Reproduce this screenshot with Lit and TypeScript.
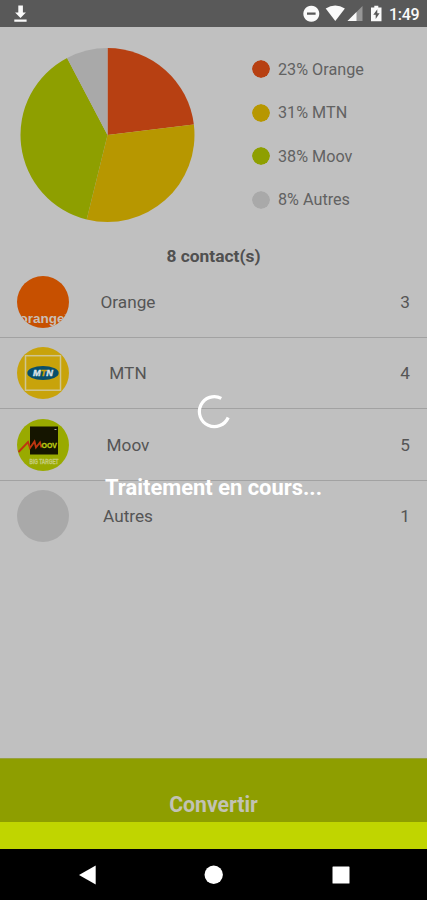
import { LitElement, html, svg, css } from "lit";
import { customElement } from "lit/decorators.js";

interface Slice {
  name: string;
  percent: number;
  count: number;
  color: string;
}

const SLICES: Slice[] = [
  { name: "Orange", percent: 23, count: 3, color: "#b74012" },
  { name: "MTN", percent: 31, count: 4, color: "#b79700" },
  { name: "Moov", percent: 38, count: 5, color: "#8e9f00" },
  { name: "Autres", percent: 8, count: 1, color: "#a9a9a9" },
];
const TOTAL = SLICES.reduce((sum, s) => sum + s.count, 0);

@customElement("status-bar")
class StatusBar extends LitElement {
  static styles = css`
    :host { display: block; height: 26.5px; background: #595959; }
    svg { display: block; }
    text { font: 500 16px Roboto, sans-serif; fill: #fafafa; }
  `;
  render() {
    return html`<svg width="427" height="27" viewBox="0 0 427 27" fill="#fafafa">
      <path d="M18.3 5.5h4.6v7h3L20.5 18l-5.400-5.500h3.200zM14.300 19.600h12.300v2.200H14.300z" />
      <path fill-rule="evenodd" d="M311.300 5.700a8 8 0 1 0 .01 0zM307 12.500h8.600v2.200H307z" />
      <path d="M325.700 8.600Q335.200 2.600 344.900 8.600L335.300 21z" />
      <path d="M362.500 6v15h-15z" opacity=".38" />
      <path d="M356.500 12v9h-9z" />
      <path fill-rule="evenodd" d="M374.300 5.800h4v1.700h3.200v13.700H371V7.500h3.300zM377.300 9.300l-4 5.500h2.400v4.200l3.900-5.800h-2.300z" />
      <text x="389" y="20" textLength="30.500">1:49</text>
    </svg>`;
  }
}

@customElement("share-pie")
class SharePie extends LitElement {
  static styles = css`
    :host { display: block; width: 175px; height: 175px; }
    svg { display: block; }
  `;
  render() {
    const cx = 87.5;
    const cy = 87;
    const r = 87;
    const point = (share: number) => {
      const a = share * Math.PI * 2;
      return `${cx + r * Math.sin(a)} ${cy - r * Math.cos(a)}`;
    };
    let from = 0;
    return html`<svg width="175" height="175">
      ${SLICES.map((s) => {
        const to = from + s.count / TOTAL;
        const d = `M${cx} ${cy}L${point(from)}A${r} ${r} 0 0 1 ${point(to)}Z`;
        from = to;
        return svg`<path d=${d} fill=${s.color} />`;
      })}
    </svg>`;
  }
}

@customElement("operator-logo")
class OperatorLogo extends LitElement {
  static properties = { name: { type: String } };
  declare name: string;
  static styles = css`
    :host { display: block; width: 52px; height: 52px; }
    svg { display: block; width: 52px; height: 52px; border-radius: 50%; }
    text { font-family: "Liberation Sans", sans-serif; font-weight: 700; }
    .brand { font-size: 13.500px; fill: #c9bfb6; }
    .mtn { font-size: 9px; font-style: italic; fill: #dbe3e6; stroke: #dbe3e6; stroke-width: .4px; }
    .gold { fill: #c9a20c; stroke: #c9a20c; }
    .moov { font-size: 7.500px; fill: #bdcb12; stroke: #bdcb12; stroke-width: .3px; }
    .mark { font-size: 3px; }
    .tag { font-size: 6.500px; fill: #c5cc78; stroke: #c5cc78; stroke-width: .3px; }
  `;
  private art() {
    switch (this.name) {
      case "Orange":
        return svg`<rect width="52" height="52" fill="#c75000" />
          <text class="brand" x="2.500" y="47">orange<tspan class="mark" dy="-7">™</tspan></text>`;
      case "MTN":
        return svg`<rect width="52" height="52" fill="#c8a30b" />
          <rect x="8.500" y="8.700" width="35" height="34.500" fill="none" stroke="#cfc591" stroke-width="1.500" />
          <ellipse cx="26" cy="26" rx="15.700" ry="7" fill="#094f6b" />
          <text class="mtn" x="16" y="29.200" textLength="20" lengthAdjust="spacingAndGlyphs">M<tspan class="gold">T</tspan>N</text>`;
      case "Moov":
        return svg`<rect width="52" height="52" fill="#99aa00" />
          <rect x="13" y="7.500" width="28" height="28" fill="#151500" />
          <path d="M1.500 33L11 23L13 29L17.500 22.500L19 28.500L23 23.500L24.500 28.500" fill="none" stroke="#be3510" stroke-width="1.900" />
          <text class="moov" x="24.500" y="28.500" textLength="15.500" lengthAdjust="spacingAndGlyphs">OOV</text>
          <rect x="37.500" y="10" width="2" height="1" fill="#aaa" />
          <text class="tag" x="12.500" y="45.200" textLength="29" lengthAdjust="spacingAndGlyphs">BIG TARGET</text>`;
      default:
        return svg`<rect width="52" height="52" fill="#a9a9a9" />`;
    }
  }
  render() {
    return html`<svg viewBox="0 0 52 52">${this.art()}</svg>`;
  }
}

@customElement("app-root")
class AppRoot extends LitElement {
  static styles = css`
    :host {
      display: flex; flex-direction: column; position: relative;
      width: 427px; height: 900px; overflow: hidden;
      background: #c0c0c0; color: #555; font-family: Roboto, sans-serif;
    }
    .summary { display: flex; padding: 21px 0 0 19.5px; height: 175px; }
    .legend { display: flex; flex-direction: column; margin-left: 57px; }
    .entry { display: flex; align-items: center; height: 43.5px; gap: 8.500px; font-size: 16.200px; color: #626262; }
    .dot { width: 18px; height: 18px; border-radius: 50%; }
    .total { margin: 23.500px 0 0; height: 20px; line-height: 20px; text-align: center; font-size: 17.400px; font-weight: 700; color: #505050; }
    .list { flex: 1; padding-top: .9px; }
    .row {
      display: grid; grid-template-columns: 52px 118px 1fr; align-items: center;
      height: 70.300px; padding: 0 17px; border-bottom: 1px solid #a2a2a2;
      font-size: 17.200px;
    }
    .row:last-child { border: 0; }
    .name { text-align: center; }
    .count { text-align: right; }
    .convert {
      height: 64px; box-sizing: border-box; padding-top: 33px; line-height: 26px;
      background: #8e9e00; color: #c2c2b4; border-top: 1px solid #98a040;
      text-align: center; font-size: 21.200px; font-weight: 700;
    }
    .strip { height: 26.500px; background: #c0d500; }
    .nav { height: 51.500px; background: #000; }
    .nav svg { display: block; }
    .loading {
      position: absolute; inset: 393.500px 0 auto; display: flex;
      flex-direction: column; align-items: center; gap: 45px; color: #fff;
      font-size: 21.900px; line-height: 26px; font-weight: 700;
    }
    .spinner { display: block; }
  `;
  render() {
    return html`
      <status-bar></status-bar>
      <div class="summary">
        <share-pie></share-pie>
        <div class="legend">
          ${SLICES.map((s) => html`<div class="entry">
            <svg class="dot" viewBox="0 0 18 18"><circle cx="9" cy="9" r="9" fill=${s.color} /></svg>
            <span>${s.percent}% ${s.name}</span>
          </div>`)}
        </div>
      </div>
      <div class="total">8 contact(s)</div>
      <div class="list">
        ${SLICES.map((s) => html`<div class="row">
          <operator-logo .name=${s.name}></operator-logo>
          <span class="name">${s.name}</span>
          <span class="count">${s.count}</span>
        </div>`)}
      </div>
      <div class="convert">Convertir</div>
      <div class="strip"></div>
      <div class="nav">
        <svg width="427" height="51" viewBox="0 0 427 51" fill="#fff">
          <path d="M79 26L95.700 16.500V35.500z" />
          <circle cx="213.700" cy="25.700" r="9.200" />
          <rect x="332.500" y="17.500" width="17" height="17" rx=".6" />
        </svg>
      </div>
      <div class="loading">
        <svg class="spinner" width="34" height="36" viewBox="0 0 34 36">
          <path d="M24.300 4.300A15 15 0 1 0 31.200 23.500" fill="none" stroke="#fff" stroke-width="3.200" />
        </svg>
        <span>Traitement en cours...</span>
      </div>
    `;
  }
}
